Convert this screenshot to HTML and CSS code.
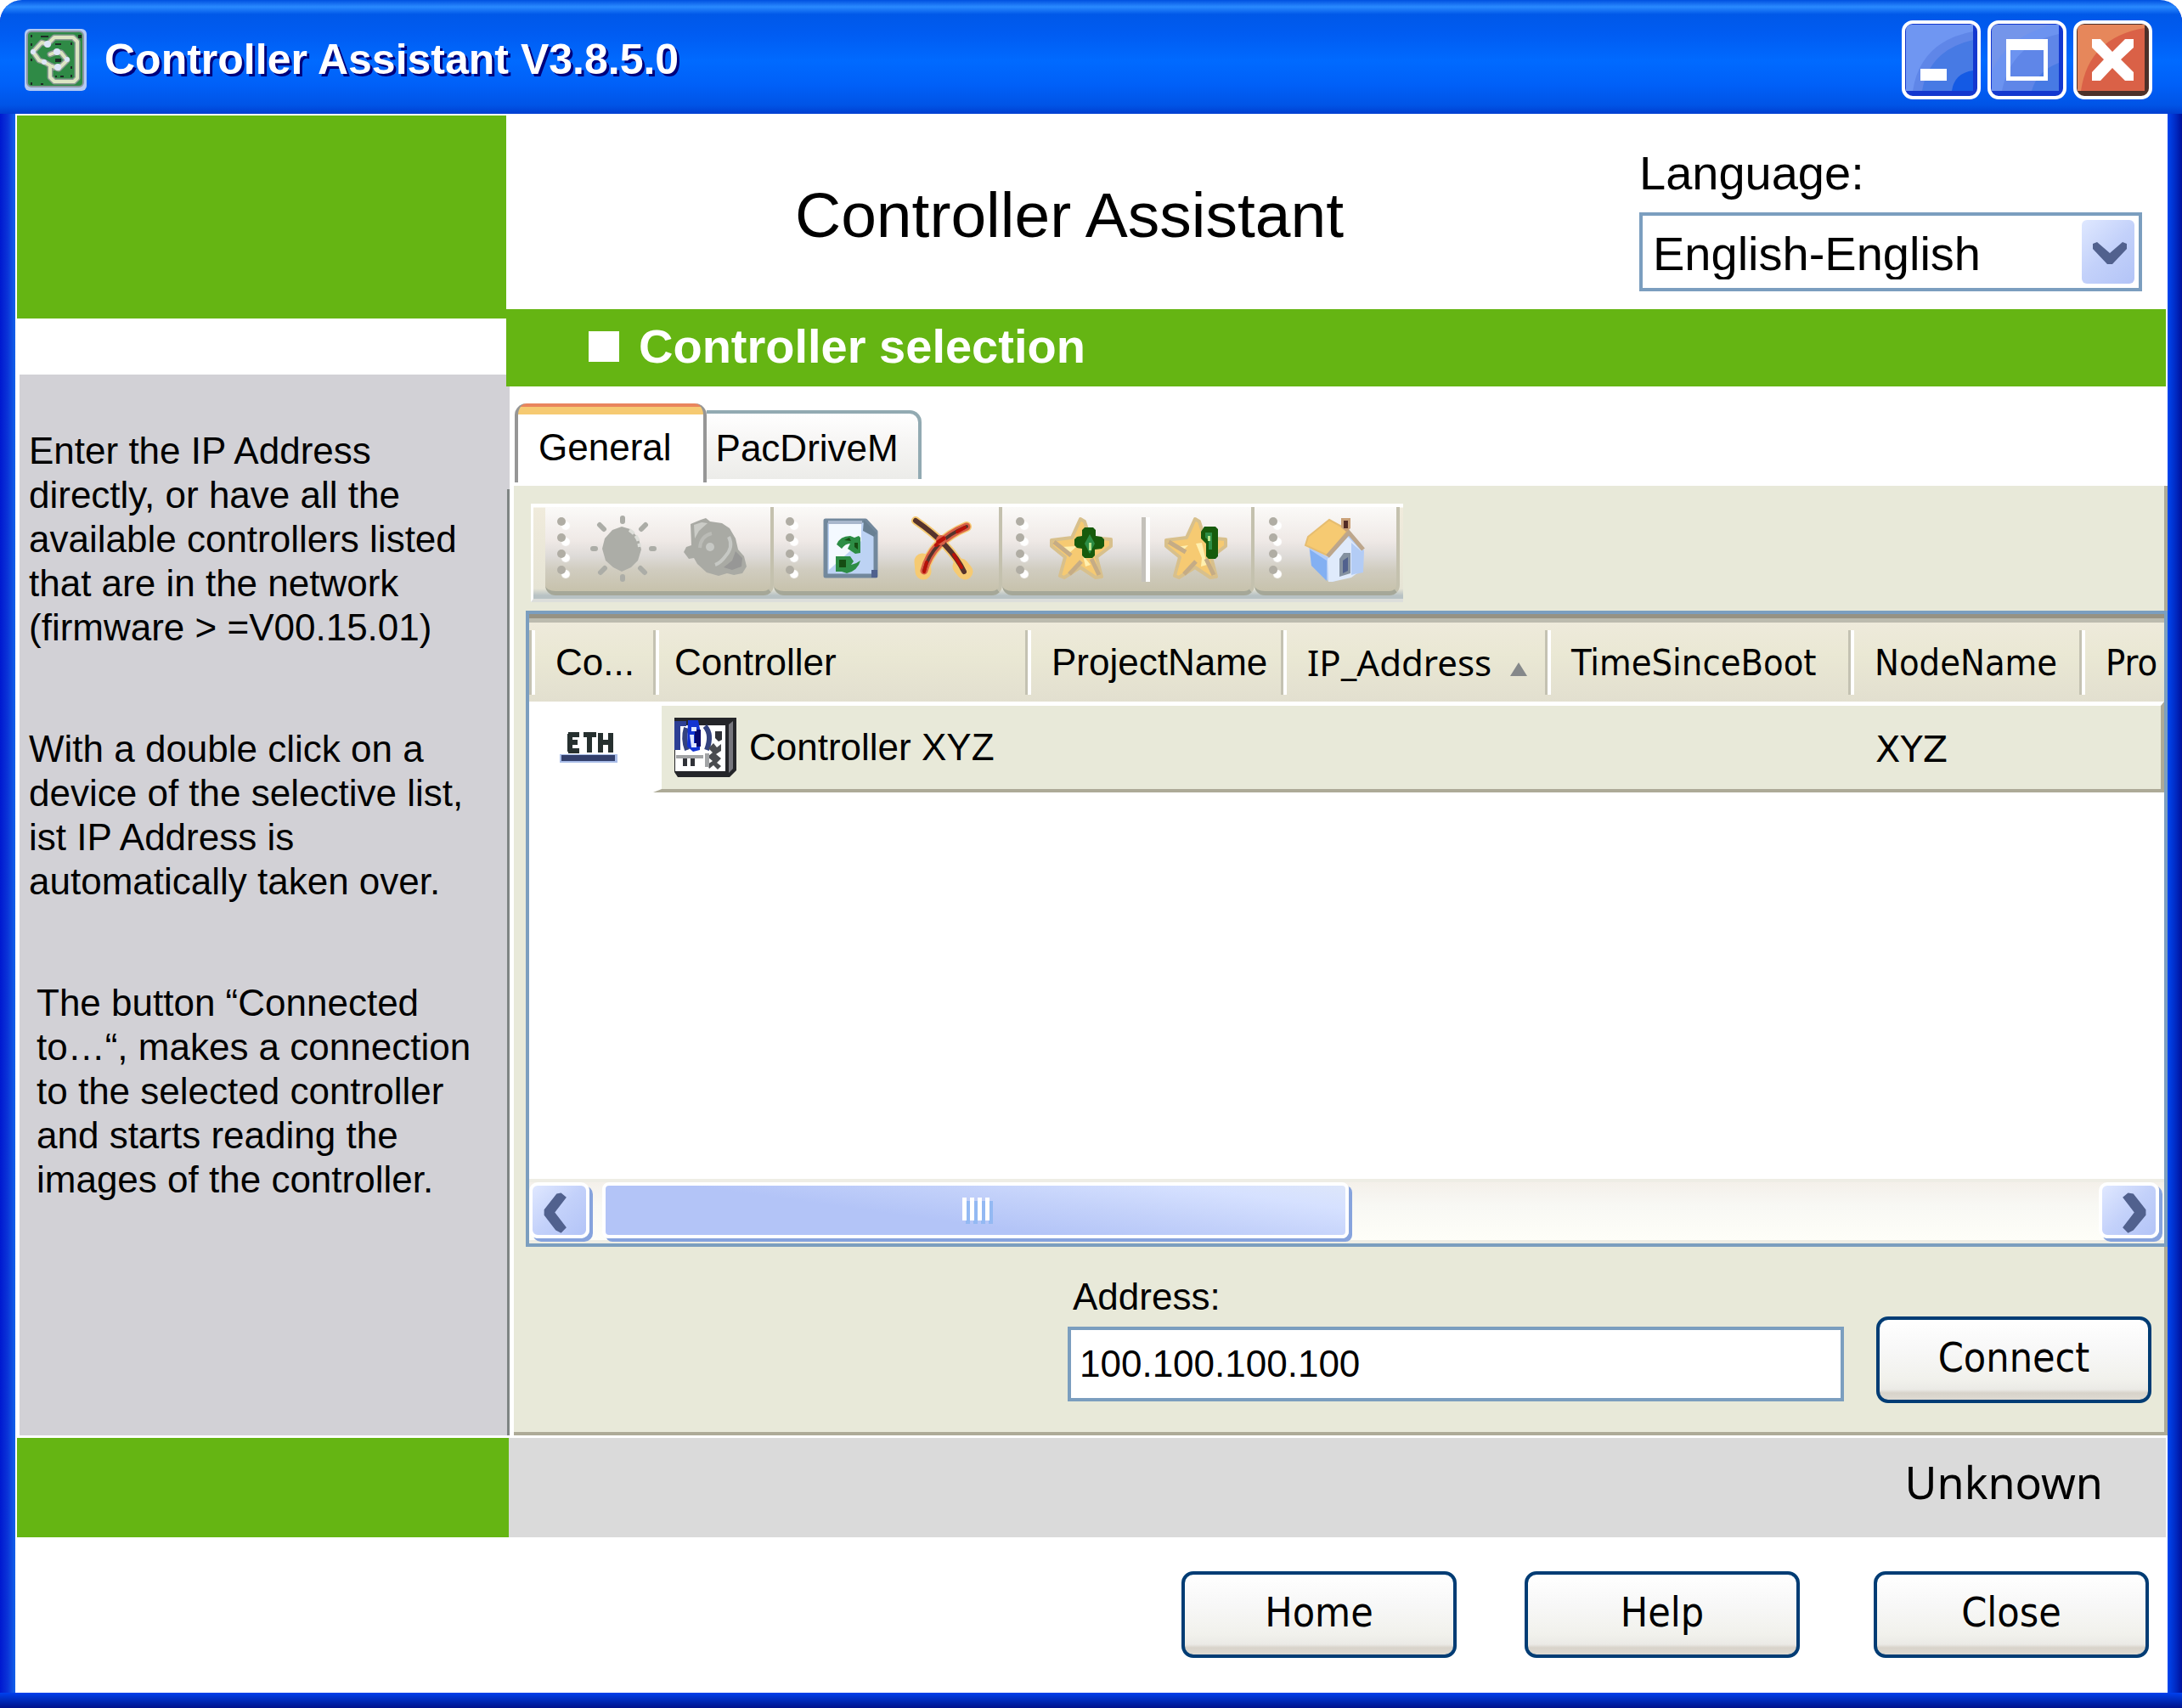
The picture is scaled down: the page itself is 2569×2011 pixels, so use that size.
FILE: index.html
```
<!DOCTYPE html>
<html lang="en">
<head>
<meta charset="utf-8">
<title>Controller Assistant V3.8.5.0</title>
<link rel="stylesheet" href="styles.css">
</head>
<body>
<div class="window">
  <header class="titlebar">
    <svg class="app-icon" viewBox="0 0 75 75" aria-hidden="true">
      <rect x="1" y="1" width="73" height="73" rx="6" fill="#b4caf2"/>
      <rect x="4" y="4" width="66" height="65" rx="5" fill="#2f8a46" stroke="#8d97a5" stroke-width="2"/>
      <g fill="none" stroke-linejoin="round" stroke-linecap="round">
        <path d="M28 19L21 17L11 28L18 38L24 40L31 44M31 31L39 28L44 29L51 38L41 48L31 44M31 44V58L36 63H59L63 59V16L58 11H36L28 19" stroke="#8b9a94" stroke-width="7"/>
        <path d="M28 19L21 17L11 28L18 38L24 40L31 44M31 31L39 28L44 29L51 38L41 48L31 44M31 44V58L36 63H59L63 59V16L58 11H36L28 19" stroke="#dbe5c2" stroke-width="4"/>
      </g>
      <g fill="#dde6f8"><circle cx="28" cy="19" r="4"/><circle cx="11" cy="28" r="3"/><circle cx="24" cy="40" r="3"/><circle cx="39" cy="28" r="4"/><circle cx="51" cy="37" r="3"/><circle cx="40" cy="46" r="4"/></g>
      <path d="M8 8h2v3h-2zM20 9h9v2h-9zM64 8h4v4h-4zM37 18h7v2h-7zM55 17h2v3h-2zM8 18h2v3h-2zM37 36h7v4h-7zM8 36h2v3h-2zM8 64h2v3h-2zM20 65h3v2h-3zM37 56h2v2h-2zM43 56h4v2h-4zM55 55h2v3h-2zM55 45h2v3h-2z" fill="#1d2b26"/>
    </svg>
    <h1 class="titlebar-text">Controller Assistant V3.8.5.0</h1>
    <div class="window-controls">
      <button class="win-button" type="button" aria-label="Minimize">
        <svg viewBox="0 0 93 93"><rect x="2" y="2" width="89" height="89" rx="11" fill="#1438cf" stroke="#fff" stroke-width="4"/><path d="M5 12Q5 5 12 5H84V80Q84 83 80 83H5z" fill="#6f96f2"/><path d="M84 13Q22 25 13 83H84z" fill="#5f86e8"/><path d="M84 23Q32 35 24 83H84z" fill="#477ae4"/><path d="M84 59Q62 62 59 83H84z" fill="#145ae4"/><rect x="22" y="57" width="31" height="14" fill="#fff"/></svg>
      </button>
      <button class="win-button" type="button" aria-label="Maximize">
        <svg viewBox="0 0 93 93"><rect x="2" y="2" width="89" height="89" rx="11" fill="#1438cf" stroke="#fff" stroke-width="4"/><path d="M5 12Q5 5 12 5H84V80Q84 83 80 83H5z" fill="#7495ea"/><path d="M76 5Q22 20 5 60V83H84V5z" fill="#6c93f0"/><path d="M84 16Q28 28 17 83H84z" fill="#5f86e8"/><path d="M84 50Q58 60 52 83H84z" fill="#477ae4"/><path d="M22 22h49v49H22zM27 35v31h39V35z" fill="#fff" fill-rule="evenodd"/></svg>
      </button>
      <button class="win-button" type="button" aria-label="Close window">
        <svg viewBox="0 0 93 93"><rect x="2" y="2" width="89" height="89" rx="11" fill="#4d3029" stroke="#fff" stroke-width="4"/><path d="M5 12Q5 5 12 5H84V80Q84 83 80 83H5z" fill="#e6875b"/><path d="M84 9Q18 20 9 83H84z" fill="#da6147"/><path d="M22 22h10l14 15 15-15h10v10L56 46l15 15v10H61L46 56 32 71H22V61l14-15L22 32z" fill="#fff"/></svg>
      </button>
    </div>
  </header>

  <div class="body">
    <aside class="sidebar">
      <div class="brand-block"></div>
      <div class="help">
        <p>Enter the IP Address directly, or have all the available controllers listed that are in the network (firmware &gt; =V00.15.01)</p>
        <p>With a double click on a device of the selective list, ist IP Address is automatically taken over.</p>
        <p class="indent">The button “Connected to…“, makes a connection to the selected controller and starts reading the images of the controller.</p>
      </div>
    </aside>

    <main class="content">
      <div class="page-header">
        <div class="page-title">Controller Assistant</div>
        <div class="language">
          <label for="language">Language:</label>
          <div class="select-box">
            <select id="language"><option>English-English</option></select>
            <span class="select-arrow"><svg viewBox="0 0 62 75"><path d="M13 28l5-2 15 13 15-13 5 2v6L36 52h-6L13 34z" fill="#51618e"/></svg></span>
          </div>
        </div>
      </div>
      <h2 class="section-bar"><span class="bullet"></span>Controller selection</h2>

      <div class="tabs" role="tablist">
        <button class="tab tab-active" type="button" role="tab" aria-selected="true">General</button>
        <button class="tab" type="button" role="tab" aria-selected="false">PacDriveM</button>
      </div>

      <section class="panel">
        <div class="toolbar" role="toolbar">
          <div class="tool-group">
            <span class="grip"><i></i><i></i><i></i><i></i></span>
            <button class="tool" type="button" aria-label="Flash lamp"><svg viewBox="0 0 80 80">
              <g stroke="#acada7" stroke-width="6" stroke-linecap="round"><path d="M40 5v4M40 74v3M5 41h3M74 41h3M13 13l5 5M67 13l-5 5M14 69l5-5M66 69l-5-5"/></g>
              <path d="M39 15l10 3 10 11 3 13-4 13-8 8-11 5-10-5-9-8-4-14 3-12 9-10z" fill="#acada7"/><path d="M48 19q11 7 12 20" stroke="#dedfda" stroke-width="4" fill="none" stroke-dasharray="7 3"/></svg></button>
            <button class="tool" type="button" aria-label="Sound"><svg viewBox="0 0 80 80">
              <path d="M13 12l12-5 6-2 5 4 14 2 9 6 7 12 3 13 7 8 3 12-5 8-10 2-8-2-10 3-14-4-11-10-4-7-6 1-6-8 3-6 6-2z" fill="#a9aaa4"/><path d="M17 13l9-3 7 1-10 9-5 9z" fill="#cbccc7"/><path d="M58 27q6 12-4 23-6 8-12 10" fill="none" stroke="#c6c8c4" stroke-width="4"/><path d="M24 40q1-14 14-17" fill="none" stroke="#babbb6" stroke-width="4"/><circle cx="36" cy="39" r="5" fill="#c6c8c4"/><path d="M66 44l8 8-1 10-11 4-10-3 10-8z" fill="#979796"/></svg></button>
          </div>
          <div class="tool-group">
            <span class="grip"><i></i><i></i><i></i><i></i></span>
            <button class="tool" type="button" aria-label="Refresh"><svg viewBox="0 0 80 80">
              <path d="M10 8h47l12 13v52H10z" fill="#bdd3f4" stroke="#72889c" stroke-width="5" stroke-linejoin="round"/><path d="M14 12h38v20L14 66z" fill="#f4f9ff"/><path d="M13 8h40v4H13z" fill="#a9b7cc"/><path d="M55 7l15 16-3 4-13-7z" fill="#687f92"/><path d="M64 66h7v9h-7z" fill="#50618e"/>
              <path d="M23 36q4-10 16-10l5 2 5-2 2 2v18l-6 1-9-6 3-6q-6 0-10 6z" fill="#2d8d45"/><path d="M22 68V50h17l4 6-3 4q6-1 11-5-3 12-16 15l-6-2z" fill="#2d8d45"/><path d="M32 31l6-3 2 4zM44 34h4v8l-4-3zM26 54h8v9h-8z" fill="#154c12"/></svg></button>
            <button class="tool" type="button" aria-label="Delete"><svg viewBox="0 0 80 80">
              <g fill="none" stroke="#f6ca72" stroke-linecap="round"><path d="M69 15Q28 32 19 67" stroke-width="12"/><path d="M9 8Q51 37 66 68" stroke-width="10"/><path d="M17 56l1 12M62 62l5 6" stroke-width="19"/></g>
              <g fill="none" stroke-linecap="round"><path d="M69 15Q28 32 19 67" stroke="#d95f45" stroke-width="9"/><path d="M9 8Q51 37 66 68" stroke="#56332c" stroke-width="6"/><path d="M69 15Q28 32 19 67" stroke="#56332c" stroke-width="4"/><path d="M67 16l-9 5M43 30l-10 7M19 68l3-11M54 48l9 15" stroke="#b71108" stroke-width="4"/><circle cx="39" cy="31" r="6" fill="#da6147"/><path d="M36 33l6-4" stroke="#b71108" stroke-width="5"/></g></svg></button>
          </div>
          <div class="tool-group">
            <span class="grip"><i></i><i></i><i></i><i></i></span>
            <button class="tool" type="button" aria-label="Add favorite"><svg viewBox="0 0 80 80">
              <path d="M39 6l5 3 6 19 25 2v8L58 51l6 23-7 1-18-12-19 12-5-2 6-22L5 38v-7l24-3z" fill="#f6ca72" stroke="#d8c08c" stroke-width="4" stroke-linejoin="round"/><path d="M16 39l19-1-10 9zM42 49l9 11-6 2z" fill="#fff0af"/><path d="M8 33l20 16M26 71l14-15M52 53l9 19" stroke="#c5ac86" stroke-width="5"/>
              <path d="M44 16h10l3 3v7l7 1 3 3v8l-3 3-8 1v7l-3 3h-9l-3-3v-8l-6-1-3-3v-7l3-3 6-1v-7z" fill="#175b0c"/><path d="M50 24l6 11-6 12-6-12z" fill="#2d8d45"/><path d="M49 34h3v9h-3z" fill="#b8e68c"/></svg></button>
            <span class="tool-divider"></span>
            <button class="tool" type="button" aria-label="Edit favorite"><svg viewBox="0 0 80 80">
              <path d="M39 6l5 3 6 19 25 2v8L58 51l6 23-7 1-18-12-19 12-5-2 6-22L5 38v-7l24-3z" fill="#f6ca72" stroke="#d8c08c" stroke-width="4" stroke-linejoin="round"/><path d="M40 35l7 17-1 10 7-2-6-26zM16 39l15-2-6 6z" fill="#fff0af"/><path d="M8 33l20 12M26 71l14-15M52 53l9 19" stroke="#c5ac86" stroke-width="5"/>
              <path d="M50 15h13l3 3v32l-3 3h-8l-3-3V35l-6-6v-8z" fill="#175b0c"/><path d="M51 22h8v20h-4V31l-4-3z" fill="#2d8d45"/><path d="M54 26h3v6h-3z" fill="#b8e68c"/></svg></button>
          </div>
          <div class="tool-group">
            <span class="grip"><i></i><i></i><i></i><i></i></span>
            <button class="tool" type="button" aria-label="Home"><svg viewBox="0 0 80 80">
              <path d="M10 38l22 13L56 24l19 19-1 26-9 2-30 10L13 60z" fill="#b3ccf5"/><path d="M11 42l20 13v24L13 61z" fill="#83b0f2"/><path d="M32 53l24-26 16 17v22l-12 9-27 6z" fill="#dfeafb"/><path d="M60 34l14 12v22l-14 4z" fill="#b3ccf5"/><path d="M34 7l22 12-24 30L6 37l3-10z" fill="#f6ca72" stroke="#e6bd70" stroke-width="2"/><path d="M32 50l25-28 17 20" fill="none" stroke="#bda68b" stroke-width="5"/><path d="M48 5h11v12l-5 4-6-5z" fill="#c9a077"/><path d="M51 8h5v9h-5z" fill="#522b25"/><path d="M46 74V53l5-7h8v24z" fill="#8491a0"/><path d="M50 70V55l6-4v16z" fill="#51618e"/></svg></button>
          </div>
        </div>

        <div class="list">
          <table class="grid">
            <colgroup><col class="c-con"><col class="c-ctl"><col class="c-prj"><col class="c-ip"><col class="c-time"><col class="c-node"><col></colgroup>
            <thead>
              <tr>
                <th>Co...</th><th>Controller</th><th>ProjectName</th>
                <th class="alt ip">IP_Address<span class="sort"></span></th><th class="alt">TimeSinceBoot</th><th class="alt">NodeName</th><th class="alt">Pro</th>
              </tr>
            </thead>
            <tbody>
              <tr>
                <td class="first"><svg class="eth" viewBox="0 0 68 38" role="img" aria-label="ETH"><path d="M10 4h13M12 3v21M10 23h13M12 13h9M28 4h15M35 4v21M48 2v23M60 2v23M48 13h12" fill="none" stroke="#26302f" stroke-width="6"/><path d="M0 27h68v10H0z" fill="#a9bde8"/><path d="M2 28h63v7H2z" fill="#323f6b"/></svg></td>
                <td class="second"><span class="device"><svg viewBox="0 0 76 70" aria-hidden="true"><path d="M2 0h73v62l-8 8H6l-4-6z" fill="#242529"/><path d="M3 9h59v54H3z" fill="#fff"/><path d="M66 8l5-4v56l-5 5z" fill="#77777e"/><path d="M2 4h14v6H9v28H2z" fill="#2c3f94"/><path d="M38 10q9 10 2 28M16 12q-4 13 1 26" fill="none" stroke="#33427f" stroke-width="6"/><path d="M18 3h12l2 10v25l-8 2-7-6z" fill="#1233d2"/><path d="M26 14h7v20h-7z" fill="#07076c"/><path d="M22 11h6v5h-6zM20 20h5v10h3v5h-6z" fill="#dfe6ff"/><path d="M4 44h32v4H4z" fill="#a2a4a6"/><path d="M12 48h5v9h-5zM21 48h5v9h-5zM50 16h8v10l-4 2-4-4z" fill="#303238"/><path d="M42 36l6-6 4 5 5-4v8l-6 4 6 5-5 5 5 4-4 4-5-5-5 4-2-5 6-4-6-5 6-5z" fill="#4a4c50"/><path d="M38 42h5v16h-5z" fill="#a2a4a6"/></svg>Controller XYZ</span></td>
                <td></td><td></td><td></td><td class="node">XYZ</td><td></td>
              </tr>
            </tbody>
          </table>
          <div class="hscroll">
            <button class="scroll-button" type="button" aria-label="Scroll left"><svg viewBox="0 0 60 60"><path d="M32 8l6 5-13 17 13 17-6 6-6-3L13 33v-6L27 9z" fill="#51618e"/></svg></button>
            <div class="thumb"><i></i><i></i><i></i><i></i></div>
            <button class="scroll-button scroll-right" type="button" aria-label="Scroll right"><svg viewBox="0 0 60 60"><path d="M29 8l-6 5 13 17-13 17 6 6 6-3 14-17v-6L35 9z" fill="#51618e"/></svg></button>
          </div>
        </div>

        <form class="connect-form">
          <div class="field">
            <label for="address">Address:</label>
            <input id="address" type="text" value="100.100.100.100">
          </div>
          <button class="button" type="button">Connect</button>
        </form>
      </section>
    </main>
  </div>

  <div class="status">
    <div class="status-block"></div>
    <div class="status-text">Unknown</div>
  </div>
  <footer class="actions">
    <button class="button" type="button">Home</button>
    <button class="button" type="button">Help</button>
    <button class="button" type="button">Close</button>
  </footer>
</div>
</body>
</html>
```
FILE: styles.css
```
* { box-sizing: border-box; }

body {
  margin: 0;
  background: #fff;
  color: #000;
  font: 44px/52px "Liberation Sans", Arial, sans-serif;
}

button, input, select { font: inherit; color: inherit; }
button { padding: 0; border: 0; background: none; }
svg { display: block; }

.window {
  display: flex;
  flex-direction: column;
  min-height: 100vh;
  padding: 0 17px 18px 18px;
  border-radius: 26px 26px 0 0;
  background:
    linear-gradient(#0040ee, #0026b0 60%, #00128c) bottom / 100% 18px no-repeat,
    linear-gradient(90deg, #0018d0, #0a34d8 50%, #1262ea) left / 18px 100% no-repeat,
    linear-gradient(90deg, #0046f0, #0028c0 60%, #00109a) right / 17px 100% no-repeat,
    #fff;
}

/* Title bar */
.titlebar {
  display: flex;
  align-items: center;
  height: 134px;
  margin: 0 -17px 0 -18px;
  padding: 6px 35px 0 28px;
  border-radius: 26px 26px 0 0;
  background: linear-gradient(#0050e0 0, #2a8aff 8px, #0058e8 17px, #005cf2 40px, #006aff 72px, #0060f8 100px, #0054e6 124px, #003ed0);
}
.app-icon { width: 75px; height: 75px; }
.titlebar-text {
  flex: 1;
  margin: 0 0 0 20px;
  font-size: 50px;
  line-height: 60px;
  color: #fff;
  text-shadow: 3px 3px 0 #00007c;
}
.window-controls { display: flex; gap: 8px; }
.win-button { width: 93px; height: 93px; }

/* Main split */
.body { display: flex; flex: 1; }
.sidebar {
  display: flex;
  flex-direction: column;
  width: 582px;
  padding: 2px 0 1px 2px;
}
.brand-block { width: 576px; height: 239px; background: #65b513; }
.help {
  flex: 1;
  margin: 66px 0 0 3px;
  padding: 64px 16px 0 11px;
  background: linear-gradient(#7f8584, #7f8584) right bottom / 3px calc(100% - 135px) no-repeat, #d2d1d6;
}
.help p { margin: 0 0 91px; }
.help .indent { padding-left: 9px; }

.content { display: flex; flex-direction: column; flex: 1; min-width: 0; }

.page-header {
  display: flex;
  justify-content: space-between;
  height: 230px;
  padding: 40px 30px 0 336px;
}
.page-title { font-size: 75px; line-height: 86px; margin-top: 36px; }
.language { width: 592px; font-size: 56px; line-height: 60px; }
.language label { display: block; }
.select-box {
  display: flex;
  height: 93px;
  margin-top: 16px;
  padding: 5px 5px 5px 0;
  border: 4px solid #7b9ebf;
  background: #fff;
}
.select-box select {
  flex: 1;
  min-width: 0;
  padding: 4px 0 0 12px;
  border: 0;
  background: none;
  appearance: none;
}
.select-arrow {
  width: 62px;
  border-radius: 6px;
  background: linear-gradient(135deg, #dfe8ff, #c3d1fa 50%, #b3c4f7);
}

.section-bar {
  display: flex;
  align-items: center;
  height: 91px;
  margin: 0 2px 0 -4px;
  padding: 0 0 3px 97px;
  background: #65b513;
  color: #fff;
  font-size: 56px;
  line-height: 64px;
}
.bullet { width: 36px; height: 36px; margin-right: 23px; background: #fff; }

/* Tabs */
.tabs {
  display: flex;
  align-items: flex-start;
  height: 117px;
  padding: 20px 0 0 6px;
}
.tab {
  height: 81px;
  margin-top: 8px;
  padding: 4px 23px 0 11px;
  border: 4px solid #92aab2;
  border-width: 4px 4px 0 0;
  border-radius: 0 14px 0 0;
  background: linear-gradient(#fff, #f7f6f5 40%, #ecece9);
}
.tab-active {
  height: 93px;
  margin-top: 0;
  padding: 10px 37px 0 24px;
  border: 4px solid #969696;
  border-width: 0 4px;
  border-radius: 14px 14px 0 0;
  background: linear-gradient(#e9855d 4px, #f6ca72 4px, #f6ca72 13px, #fff 13px);
}

/* Panel */
.panel {
  display: flex;
  flex-direction: column;
  flex: 1;
  margin: 0 0 1px 5px;
  padding-top: 21px;
  border: solid #adaa97;
  border-width: 0 4px 4px 0;
  background: #e8e9d9;
}
.toolbar {
  display: flex;
  width: 1027px;
  height: 116px;
  margin-left: 20px;
  padding: 4px 4px 0 14px;
  border-left: 3px solid #fff;
  border-bottom: 4px solid #dcdedb;
  background: linear-gradient(#fff 4px, #f0ebdc 5px, #e6e4d5 100px, #b8c2c4 108px);
}
.tool-group {
  display: flex;
  align-items: flex-start;
  flex: 272 1 0;
  height: 104px;
  padding: 8px 0 0 14px;
  border-right: 4px solid #c4c1ae;
  border-bottom: 5px solid #a5a798;
  border-radius: 0 0 12px 12px;
  background: linear-gradient(#fbfaf8, #efe9e6 40%, #dedbd8 58%, #d0ccbf 75%, #c7c2ac);
}
.tool-group:nth-child(3) { flex-grow: 300; padding-left: 16px; }
.tool-group:nth-child(4) { flex-grow: 162; padding-left: 17px; }
.grip { display: grid; gap: 9px; width: 20px; margin: 4px 17px 0 0; }
.grip i {
  width: 10px;
  height: 10px;
  border-radius: 5px;
  background: #b0ada4;
  box-shadow: 5px 5px 1px #fff;
}
.tool { width: 80px; height: 80px; margin-right: 27px; }
.tool-divider {
  width: 10px;
  height: 76px;
  margin: 4px 14px 0 31px;
  border: solid #c4c1ba;
  border-width: 0 0 0 5px;
  border-right: 5px solid #fff;
}
.tool-group:nth-child(3) .tool { margin-right: 0; }

/* Controller list */
.list {
  display: flex;
  flex-direction: column;
  justify-content: space-between;
  flex: 1;
  margin: 10px -4px 0 14px;
  border: 4px solid #7b9ebf;
  background: #fff;
  overflow: hidden;
}
.grid {
  width: 100%;
  table-layout: fixed;
  border-collapse: separate;
  border-spacing: 0;
  border-top: 5px solid #969283;
}
.c-con { width: 146px; }
.c-ctl { width: 438px; }
.c-prj { width: 301px; }
.c-ip { width: 311px; }
.c-time { width: 357px; }
.c-node { width: 272px; }
.grid th {
  height: 98px;
  padding: 0 0 0 25px;
  border-top: 5px solid #bcbbae;
  background:
    linear-gradient(90deg, #c4c2b2 3px, #fff 3px) 0 9px / 7px 76px no-repeat,
    linear-gradient(#eeeadb, #eae8d4 40%, #e2dfcf);
  font-weight: 400;
  text-align: left;
  white-space: nowrap;
}
.grid th:nth-child(1), .grid th:nth-child(3) { padding-left: 31px; }
.grid th.alt {
  padding-left: 31px;
  font-family: "DejaVu Sans Condensed", Tahoma, sans-serif;
  font-size: 43px;
}
.grid th.ip { font-family: "Noto Sans", Tahoma, sans-serif; font-size: 42px; }
.sort {
  display: inline-block;
  margin-left: 22px;
  border: solid transparent;
  border-width: 0 10px 16px;
  border-bottom-color: #85888a;
}
.grid td {
  height: 107px;
  padding: 0;
  border-top: 5px solid #fff;
  border-bottom: 4px solid #adaa97;
  background: #e8e9d9;
}
.grid td.first { padding-left: 36px; border-color: #fff; background: #fff; }
.grid td.second { border-left: 10px solid #fff; }
.grid td.node { padding: 4px 0 0 32px; font-family: "DejaVu Sans", Verdana, sans-serif; font-size: 43px; }
.grid td:last-child { border-right: 4px solid #adaa97; }
.eth { width: 68px; height: 38px; }
.device { display: flex; align-items: center; gap: 14px; padding-left: 13px; }
.device svg { width: 76px; height: 70px; }

/* Horizontal scroll bar */
.hscroll {
  display: flex;
  align-items: flex-start;
  height: 76px;
  border: solid #eeede5;
  border-width: 4px 0;
  background: linear-gradient(#f4f0ea, #f8f8f4 40%, #fefef8);
}
.scroll-button {
  width: 71px;
  height: 66px;
  margin-right: 15px;
  border: 4px solid #fff;
  border-radius: 10px;
  background: linear-gradient(135deg, #e0e8ff, #c3d1fa 50%, #b3c4f7);
  box-shadow: 4px 4px 0 #86a3dd;
}
.scroll-right { margin: 0 6px 0 auto; }
.thumb {
  display: flex;
  justify-content: center;
  gap: 4px;
  width: 879px;
  height: 66px;
  padding-top: 14px;
  border: 4px solid #fff;
  border-radius: 8px;
  background: linear-gradient(8deg, #b3c4f7 40%, #c3d1fa 62%, #d6e1ff 85%, #dde6fa);
  box-shadow: 4px 4px 0 #86a3dd;
}
.thumb i { width: 5px; height: 27px; background: #fff; box-shadow: 4px 4px 0 #93b9f3; }

/* Address form */
.connect-form {
  display: flex;
  justify-content: flex-end;
  height: 218px;
  padding: 0 15px 0 0;
}
.field { width: 914px; margin: 33px 38px 0 0; }
.field label { display: block; padding-left: 6px; }
.field input {
  width: 100%;
  height: 88px;
  margin-top: 9px;
  padding: 0 10px;
  border: 4px solid #7b9ebf;
  background: #fff;
}
.connect-form .button { margin-top: 82px; }

.button {
  width: 324px;
  height: 102px;
  padding-bottom: 6px;
  border: 4px solid #003c74;
  border-radius: 14px;
  background: linear-gradient(#fff, #f8f8f8 35%, #f1f1ec 75%, #ebeae6 82px, #d8d3ca 86px, #dedad2);
  font-family: "DejaVu Sans Condensed", Tahoma, sans-serif;
  font-size: 48px;
}

/* Status strip and footer */
.status {
  display: flex;
  height: 119px;
  padding: 2px 2px 0;
}
.status-block { width: 579px; background: #65b513; }
.status-text {
  flex: 1;
  padding: 22px 74px 0 0;
  background: #dadada;
  font: 52px/60px "Noto Sans", Verdana, sans-serif;
  text-align: right;
}
.actions {
  display: flex;
  justify-content: flex-end;
  height: 183px;
  padding: 40px 22px 0;
}
.actions .button:nth-child(2) { margin: 0 87px 0 80px; }
```
